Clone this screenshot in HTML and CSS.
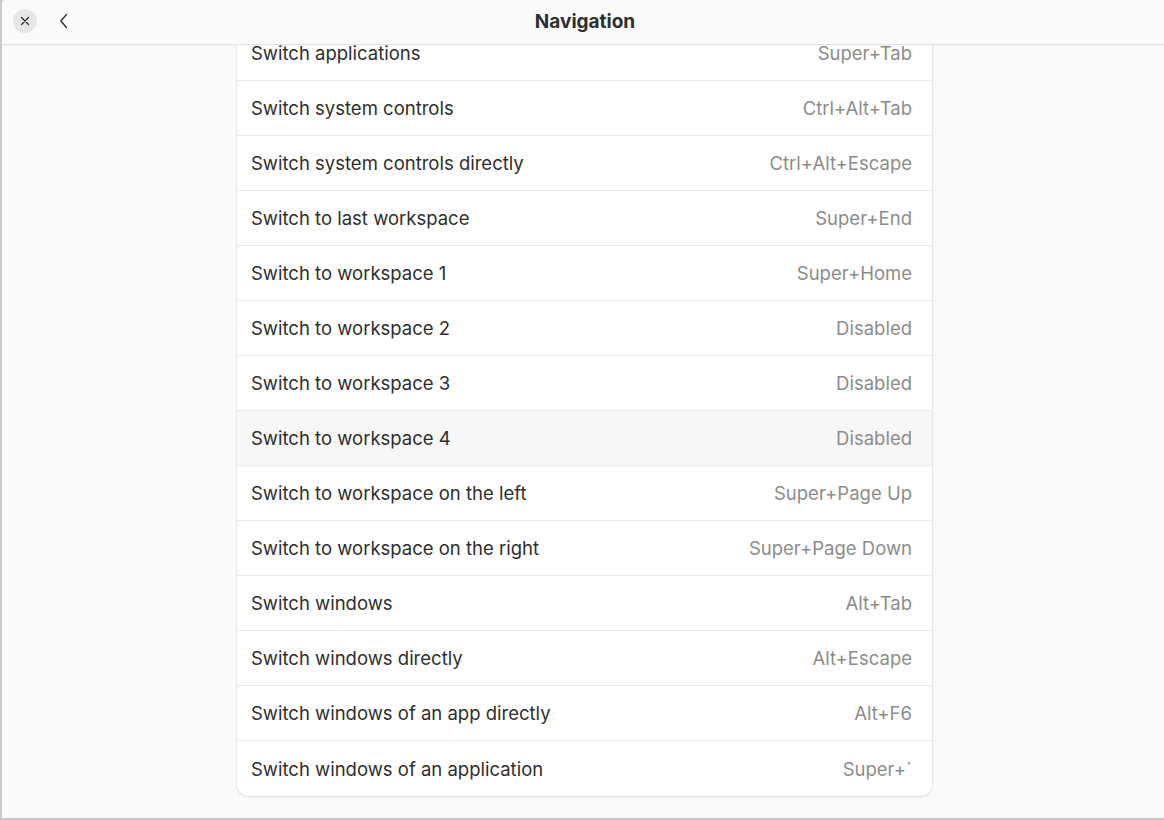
FILE: index.html
```html
<!DOCTYPE html>
<html lang="en">
<head>
<meta charset="utf-8">
<title>Navigation</title>
<link rel="stylesheet" href="styles.css">
</head>
<body>
<div class="window">
  <header class="headerbar">
    <div class="hb-start">
      <button class="close-btn" aria-label="Close">
        <svg width="10" height="10" viewBox="0 0 10 10"><path d="M1.5 1.5 L8.5 8.5 M8.5 1.5 L1.5 8.5" stroke="#2e2e2e" stroke-width="1.3" stroke-linecap="round" fill="none"/></svg>
      </button>
      <button class="back-btn" aria-label="Back">
        <svg width="10" height="16" viewBox="0 0 10 16"><path d="M7.5 1.5 L1.8 8 L7.5 14.5" stroke="#2e2e2e" stroke-width="1.3" stroke-linecap="round" stroke-linejoin="round" fill="none"/></svg>
      </button>
    </div>
    <div class="title">Navigation</div>
    <div class="hb-end"></div>
  </header>
  <main class="content">
    <div class="list">
      <div class="row"><span class="label">Switch applications</span><span class="accel">Super+Tab</span></div>
      <div class="row"><span class="label">Switch system controls</span><span class="accel">Ctrl+Alt+Tab</span></div>
      <div class="row"><span class="label">Switch system controls directly</span><span class="accel">Ctrl+Alt+Escape</span></div>
      <div class="row"><span class="label">Switch to last workspace</span><span class="accel">Super+End</span></div>
      <div class="row"><span class="label">Switch to workspace 1</span><span class="accel">Super+Home</span></div>
      <div class="row"><span class="label">Switch to workspace 2</span><span class="accel">Disabled</span></div>
      <div class="row"><span class="label">Switch to workspace 3</span><span class="accel">Disabled</span></div>
      <div class="row hover"><span class="label">Switch to workspace 4</span><span class="accel">Disabled</span></div>
      <div class="row"><span class="label">Switch to workspace on the left</span><span class="accel">Super+Page Up</span></div>
      <div class="row"><span class="label">Switch to workspace on the right</span><span class="accel">Super+Page Down</span></div>
      <div class="row"><span class="label">Switch windows</span><span class="accel">Alt+Tab</span></div>
      <div class="row"><span class="label">Switch windows directly</span><span class="accel">Alt+Escape</span></div>
      <div class="row"><span class="label">Switch windows of an app directly</span><span class="accel">Alt+F6</span></div>
      <div class="row last"><span class="label">Switch windows of an application</span><span class="accel">Super+`</span></div>
    </div>
  </main>
</div>
</body>
</html>
```

FILE: styles.css
```css
* { box-sizing: border-box; }
html, body {
  margin: 0;
  padding: 0;
  width: 1164px;
  height: 820px;
  overflow: hidden;
  background: #c9c9c9;
  font-family: Inter, "Noto Sans", sans-serif;
}
.window {
  margin-left: 2px;
  width: 1162px;
  height: 818px;
  background: #fafafa;
  display: flex;
  flex-direction: column;
  overflow: hidden;
  border-top-left-radius: 4px;
}
.headerbar {
  height: 45px;
  flex: none;
  display: flex;
  align-items: center;
  background: #fafafa;
  border-bottom: 1px solid #e2e2e2;
  box-shadow: 0 1px 2px rgba(0,0,0,0.04);
  position: relative;
  z-index: 2;
}
.hb-start {
  display: flex;
  align-items: center;
  gap: 15px;
  padding-left: 11px;
  width: 200px;
}
.hb-end { width: 200px; }
.close-btn {
  width: 24px;
  height: 24px;
  border-radius: 50%;
  border: none;
  background: #e6e6e6;
  display: flex;
  align-items: center;
  justify-content: center;
  padding: 0;
  margin-top: -3px;
}
.back-btn {
  width: 24px;
  height: 24px;
  border: none;
  background: transparent;
  display: flex;
  align-items: center;
  justify-content: center;
  padding: 0;
  margin-top: -3px;
}
.title {
  flex: 1;
  text-align: center;
  font-weight: 700;
  font-size: 19px;
  color: #2e2e2e;
  margin-top: -1px;
  padding-left: 4px;
}
.content {
  flex: 1;
  overflow: hidden;
  display: flex;
  justify-content: center;
}
.list {
  width: 695px;
  margin-top: -19px;
  margin-left: 3px;
  align-self: flex-start;
  background: #ffffff;
  border-radius: 0 0 12px 12px;
  box-shadow: 0 0 0 1px rgba(0,0,0,0.03), 0 1px 3px rgba(0,0,0,0.09);
  overflow: hidden;
}
.row {
  height: 55px;
  display: flex;
  align-items: center;
  justify-content: space-between;
  padding: 0 20px 0 14px;
  border-bottom: 1px solid #ebebeb;
  font-size: 18.5px;
}
.row.last { border-bottom: none; }
.row.hover { background: #f7f7f7; }
.label { color: #2e2e2e; }
.accel { color: #8c8c8c; }
```
